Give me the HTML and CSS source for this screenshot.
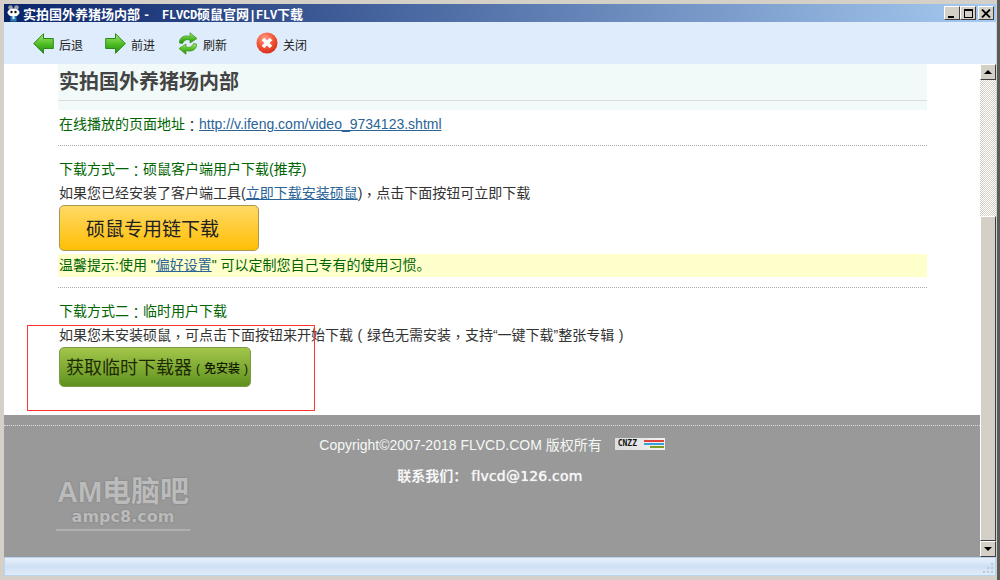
FILE: index.html
```html
<!DOCTYPE html>
<html lang="zh-CN">
<head>
    <meta charset="UTF-8">
    <title>实拍国外养猪场内部 - FLVCD硕鼠官网|FLV下载</title>
    <link rel="stylesheet" href="styles.css">
</head>
<body>
    <div class="window">
        <div class="titlebar">
            <svg class="app-icon" width="14" height="17" viewBox="0 0 14 17">
                <circle cx="3.500" cy="2.500" r="2.300" fill="#9a9ea6"/>
                <circle cx="9.500" cy="2.500" r="2.300" fill="#9a9ea6"/>
                <ellipse cx="6.500" cy="7.500" rx="6" ry="4" fill="#fff"/>
                <circle cx="4.500" cy="7" r="1.200" fill="#111"/>
                <circle cx="8.500" cy="7" r="1.200" fill="#111"/>
                <rect x="3.500" y="11" width="6" height="5.500" fill="#2f7fb5"/>
                <rect x="5.500" y="11" width="2" height="3" fill="#e8f0f8"/>
            </svg>
            <div class="title">实拍国外养猪场内部 <span class="latin title-sep">-</span><span class="latin">FLVCD</span>硕鼠官网<span class="latin">|FLV</span>下载</div>
            <div class="win-buttons">
                <div class="win-btn"><span class="glyph-min"></span></div>
                <div class="win-btn"><span class="glyph-max"></span></div>
                <div class="win-btn win-close">
                    <svg width="10" height="9" viewBox="0 0 10 9"><path d="M1 0.500L9 8.500M9 0.500L1 8.500" stroke="#000" stroke-width="1.800"/></svg>
                </div>
            </div>
        </div>

        <div class="toolbar">
            <div class="tool tool-back">
                <svg width="21" height="21" viewBox="0 0 21 21">
                    <defs>
                        <linearGradient id="arrowfill" x1="0" y1="0" x2="0" y2="1"><stop offset="0" stop-color="#a6e86e"/><stop offset=".55" stop-color="#4dbb22"/><stop offset="1" stop-color="#1f8f10"/></linearGradient>
                    </defs>
                    <path d="M.7 10.500L10.500 .7V5.500H20.300V15.500H10.500V20.300Z" fill="url(#arrowfill)" stroke="#2a8a18"/>
                </svg>
                <span>后退</span>
            </div>
            <div class="tool tool-forward">
                <svg width="21" height="21" viewBox="0 0 21 21">
                    <path d="M20.300 10.500L10.500 .7V5.500H.7V15.500H10.500V20.300Z" fill="url(#arrowfill)" stroke="#2a8a18"/>
                </svg>
                <span>前进</span>
            </div>
            <div class="tool tool-refresh">
                <svg width="20" height="23" viewBox="0 0 20 23">
                    <path d="M1.500 11C1 5.500 6.500 2.500 12 4.500V.7L19 6.500L12 11V8C8.500 7 6 8 4.500 11.500Z" fill="url(#arrowfill)" stroke="#3c8f1c" stroke-width=".7"/>
                    <path d="M18.500 12C19 17.500 13.500 20.500 8 18.500V22.300L1 16.500L8 12V15C11.500 16 14 15 15.500 11.500Z" fill="url(#arrowfill)" stroke="#3c8f1c" stroke-width=".7"/>
                </svg>
                <span>刷新</span>
            </div>
            <div class="tool tool-close">
                <svg width="22" height="22" viewBox="0 0 22 22">
                    <defs>
                        <radialGradient id="redball" cx=".4" cy=".3" r=".8"><stop offset="0" stop-color="#ff9f88"/><stop offset=".6" stop-color="#ee4a2c"/><stop offset="1" stop-color="#c9281a"/></radialGradient>
                    </defs>
                    <circle cx="11" cy="11" r="10.500" fill="url(#redball)"/>
                    <path d="M7 7L15 15M15 7L7 15" stroke="#fff" stroke-width="3.600"/>
                </svg>
                <span>关闭</span>
            </div>
        </div>

        <div class="viewport">
            <div class="page">
                <div class="content">
                    <div class="title-band">
                        <h1 class="video-title">实拍国外养猪场内部</h1>
                    </div>
                    <div class="line play-url"><span class="green">在线播放的页面地址</span><span class="punct" lang="zh-TW">：</span><a href="#">http://v.ifeng.com/video_9734123.shtml</a></div>
                    <div class="dash first-dash"></div>
                    <div class="line method-head green">下载方式一<span class="punct" lang="zh-TW">：</span>硕鼠客户端用户下载(推荐)</div>
                    <div class="line method-desc">如果您已经安装了客户端工具(<a href="#">立即下载安装硕鼠</a>)<span class="punct" lang="zh-TW">，</span>点击下面按钮可立即下载</div>
                    <div class="btn btn-yellow"><span>硕鼠专用链下载</span></div>
                    <div class="tip green">温馨提示:使用 "<a href="#">偏好设置</a>" 可以定制您自己专有的使用习惯。</div>
                    <div class="dash second-dash"></div>
                    <div class="line method-head green">下载方式二<span class="punct" lang="zh-TW">：</span>临时用户下载</div>
                    <div class="line method-desc">如果您未安装硕鼠<span class="punct" lang="zh-TW">，</span>可点击下面按钮来开始下载<span class="paren">(</span>绿色无需安装<span class="punct" lang="zh-TW">，</span>支持“一键下载”整张专辑<span class="paren">)</span></div>
                    <div class="btn btn-green"><span>获取临时下载器</span><small><span class="paren">(</span>免安装<span class="paren">)</span></small></div>
                </div>
                <div class="footer">
                    <div class="copyright">
                        <span>Copyright©2007-2018 FLVCD.COM 版权所有</span>
                        <div class="cnzz">
                            <span class="cnzz-text">CNZZ</span>
                            <span class="cnzz-bars"><i class="bar-red"></i><i class="bar-blue"></i><i class="bar-green"></i></span>
                        </div>
                    </div>
                    <div class="contact">联系我们： <span>flvcd@126.com</span></div>
                </div>
                <div class="watermark">
                    <div class="wm-big">AM电脑吧</div>
                    <div class="wm-small">ampc8.com</div>
                </div>
                <div class="red-box"></div>
            </div>
            <div class="scrollbar">
                <div class="sb-btn"><span class="arrow-up"></span></div>
                <div class="sb-track"></div>
                <div class="sb-thumb"></div>
                <div class="sb-btn"><span class="arrow-down"></span></div>
            </div>
        </div>

        <div class="statusbar">
            <svg class="grip" width="12" height="12" viewBox="0 0 12 12">
                <path d="M9 1h2v2H9zM5 5h2v2H5zM9 5h2v2H9zM1 9h2v2H1zM5 9h2v2H5zM9 9h2v2H9z" fill="#b4cbe2"/>
            </svg>
        </div>
    </div>
</body>
</html>
```
FILE: styles.css
```css
html, body {
    margin: 0;
    padding: 0;
}

body {
    width: 1000px;
    height: 580px;
    overflow: hidden;
    font-family: "Liberation Sans", "Noto Sans CJK SC", sans-serif;
    font-size: 14px;
    color: #333;
}

.window {
    width: 1000px;
    height: 580px;
    box-sizing: border-box;
    padding: 4px 1px 4px 4px;
    background-color: #d4d0c8;
    border-right: 3px solid #5a5a5a;
    display: flex;
    flex-direction: column;
}

.titlebar {
    height: 18px;
    flex-shrink: 0;
    display: flex;
    align-items: center;
    background: linear-gradient(to right, #0a246a, #a6caf0);
    color: white;
}

.app-icon {
    margin: 0 2px 0 3px;
    flex-shrink: 0;
}

.title {
    flex-grow: 1;
    font-family: "Noto Sans CJK SC", sans-serif;
    font-size: 13px;
    font-weight: bold;
    white-space: nowrap;
}

.title .latin {
    font-family: "Liberation Mono", monospace;
    font-size: 12px;
    letter-spacing: -.2px;
}

.title .title-sep {
    margin-right: 12px;
}

.win-buttons {
    display: flex;
    margin-right: 2px;
}

.win-btn {
    width: 16px;
    height: 14px;
    box-sizing: border-box;
    background-color: #d4d0c8;
    border-top: 1px solid #fff;
    border-left: 1px solid #fff;
    border-right: 1px solid #404040;
    border-bottom: 1px solid #404040;
    display: flex;
    align-items: center;
    justify-content: center;
}

.win-close {
    margin-left: 2px;
}

.glyph-min {
    width: 6px;
    height: 2px;
    background-color: #000;
    margin-top: 7px;
    margin-right: 2px;
}

.glyph-max {
    width: 9px;
    height: 9px;
    box-sizing: border-box;
    border: 1px solid #000;
    border-top-width: 2px;
}

.toolbar {
    height: 42px;
    flex-shrink: 0;
    background-color: #dfecfb;
    display: flex;
    align-items: center;
    font-size: 12px;
    color: #222;
}

.tool {
    display: flex;
    align-items: center;
    gap: 5px;
}

.tool span {
    margin-top: 2px;
}

.tool-back {
    margin-left: 29px;
}

.tool-forward {
    margin-left: 22px;
}

.tool-refresh {
    margin-left: 23px;
}

.tool-close {
    margin-left: 29px;
}

.viewport {
    height: 493px;
    flex-shrink: 0;
    display: flex;
    background-color: white;
}

.page {
    width: 976px;
    flex-shrink: 0;
    position: relative;
    display: flex;
    flex-direction: column;
}

.content {
    height: 351px;
    box-sizing: border-box;
    padding: 0 53px 0 54px;
    flex-shrink: 0;
}

.title-band {
    height: 46px;
    background-color: #f1faf8;
}

.video-title {
    margin: 0;
    height: 36px;
    line-height: 36px;
    padding-left: 1px;
    font-size: 20px;
    font-weight: bold;
    color: #444;
    border-bottom: 1px solid #ddd;
}

.green {
    color: #006400;
}

/* centred full-width punctuation, as the original font draws it */
.punct {
    font-family: "Noto Sans CJK TC", sans-serif;
    line-height: 0;
    vertical-align: -2px;
}

.paren {
    margin: 0 .33em;
}

a {
    color: #2a6496;
    text-decoration: underline;
}

.line {
    padding-left: 1px;
    line-height: 20px;
    height: 20px;
    white-space: nowrap;
}

.play-url {
    margin-top: 4px;
}

.dash {
    border-top: 1px dotted #aaa;
}

.first-dash {
    margin-top: 11px;
}

.method-head {
    margin-top: 13px;
}

.method-desc {
    margin-top: 4px;
    color: #333;
}

.btn {
    box-sizing: border-box;
    display: flex;
    align-items: center;
    margin-left: 1px;
    border-radius: 5px;
    white-space: nowrap;
    padding-bottom: 2px;
}

.btn-yellow {
    width: 200px;
    height: 46px;
    margin-top: 2px;
    justify-content: center;
    padding-right: 13px;
    font-size: 19px;
    color: #222;
    border: 1px solid #a89a4c;
    background: linear-gradient(to bottom, #ffd966, #ffbf05);
}

.btn-green {
    width: 192px;
    height: 40px;
    margin-top: 2px;
    padding-left: 6px;
    font-size: 18px;
    color: #1d2b05;
    border: 1px solid #7d9a45;
    background: linear-gradient(to bottom, #a3c64a, #5f911f);
}

.btn-green small {
    font-size: 12px;
    font-weight: 500;
    color: #101a02;
    padding-top: 2px;
}

.tip {
    margin-top: 3px;
    height: 23px;
    line-height: 23px;
    padding-left: 1px;
    background-color: #ffffcc;
}

.second-dash {
    margin-top: 10px;
}

.footer {
    flex-grow: 1;
    background-color: #999;
    color: white;
    display: flex;
    flex-direction: column;
    align-items: center;
    position: relative;
}

.footer::before {
    content: "";
    position: absolute;
    top: 10px;
    left: 0;
    right: 0;
    border-top: 1px dotted #ddd;
}

.copyright {
    margin-top: 20px;
    display: flex;
    align-items: center;
    gap: 13px;
    height: 18px;
    color: #f4f8f4;
}

.cnzz {
    width: 50px;
    height: 12px;
    display: flex;
    background: linear-gradient(to right, #ddd, #f2f2f2);
}

.cnzz-text {
    font-family: "DejaVu Sans Mono", monospace;
    font-size: 8px;
    font-weight: bold;
    line-height: 12px;
    color: #111;
    width: 26px;
    padding-left: 3px;
}

.cnzz-bars {
    flex-grow: 1;
    display: flex;
    flex-direction: column;
    justify-content: center;
    gap: 1px;
    align-items: flex-end;
    padding-right: 1px;
}

.cnzz-bars i {
    display: block;
    height: 2px;
}

.bar-red {
    width: 20px;
    background-color: #e0403a;
}

.bar-blue {
    width: 20px;
    background-color: #3aa0d8;
}

.bar-green {
    width: 14px;
    background-color: #7f9f20;
}

.contact {
    margin-top: 12px;
    margin-right: 4px;
    font-weight: bold;
    color: #f6f6f6;
}

.contact span {
    font-family: "DejaVu Sans", sans-serif;
    font-weight: normal;
    letter-spacing: .2px;
    text-shadow: 0 0 1px #fff;
}

.watermark {
    position: absolute;
    left: 52px;
    top: 413px;
    width: 134px;
    text-align: center;
    color: #bbb;
    font-weight: bold;
    border-bottom: 2px solid #b0b0b0;
    padding-bottom: 3px;
    text-shadow: 0 0 2px #777;
}

.wm-big {
    font-size: 29px;
    line-height: 30px;
    white-space: nowrap;
}

.wm-small {
    font-size: 16px;
    line-height: 19px;
    font-family: "DejaVu Sans", sans-serif;
}

.red-box {
    position: absolute;
    left: 23px;
    top: 261px;
    width: 286px;
    height: 84px;
    border: 1px solid #ff3333;
}

.scrollbar {
    width: 16px;
    flex-shrink: 0;
    display: flex;
    flex-direction: column;
    background: repeating-conic-gradient(#d4d0c8 0 25%, #fff 0 50%) 0 0 / 2px 2px;
}

.sb-btn, .sb-thumb {
    box-sizing: border-box;
    background-color: #d4d0c8;
    border-top: 1px solid #fff;
    border-left: 1px solid #fff;
    border-right: 1px solid #404040;
    border-bottom: 1px solid #404040;
}

.sb-btn {
    height: 16px;
    flex-shrink: 0;
    display: flex;
    align-items: center;
    justify-content: center;
}

.sb-track {
    height: 136px;
    flex-shrink: 0;
}

.sb-thumb {
    flex-grow: 1;
}

.arrow-up {
    width: 0;
    height: 0;
    border-left: 4px solid transparent;
    border-right: 4px solid transparent;
    border-bottom: 4px solid #000;
}

.arrow-down {
    width: 0;
    height: 0;
    border-left: 4px solid transparent;
    border-right: 4px solid transparent;
    border-top: 4px solid #000;
}

.statusbar {
    height: 19px;
    flex-shrink: 0;
    box-sizing: border-box;
    border: 1px solid #b9d3ee;
    background: linear-gradient(to bottom, #e6f0fb, #cfe0f3 50%, #e0ecf8);
    display: flex;
    justify-content: flex-end;
    align-items: flex-end;
}

.grip {
    margin: 0 1px 1px 0;
}
```
